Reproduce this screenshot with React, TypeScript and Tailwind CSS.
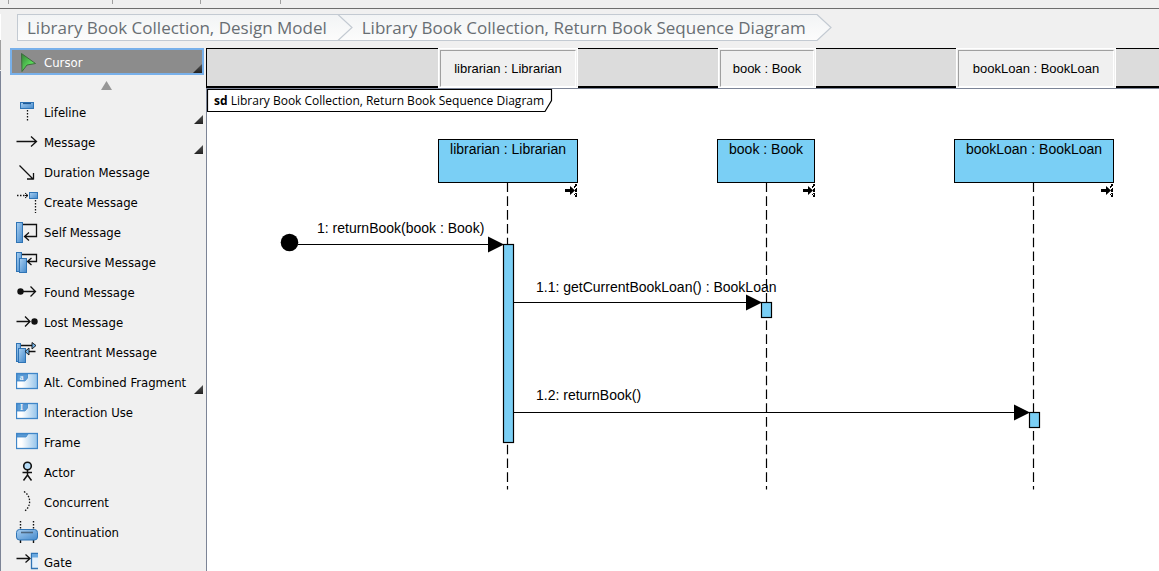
import type { ReactNode } from "react";

const BLUE = "#2f74b5";

function Defs() {
  return (
    <svg className="absolute h-0 w-0" aria-hidden="true">
      <defs>
        <linearGradient id="blueV" x1="0" y1="0" x2="1" y2="1">
          <stop offset="0" stopColor="#a9d0f2" />
          <stop offset="1" stopColor="#4489cb" />
        </linearGradient>
        <linearGradient id="paper" x1="0" y1="0" x2="1" y2="0">
          <stop offset="0.25" stopColor="#ffffff" />
          <stop offset="1" stopColor="#93c3ea" />
        </linearGradient>
        <linearGradient id="green" x1="0" y1="0" x2="1" y2="1">
          <stop offset="0.1" stopColor="#3c8f3e" />
          <stop offset="0.7" stopColor="#5fe65f" />
        </linearGradient>
        <linearGradient id="tri" x1="0" y1="0" x2="0" y2="1">
          <stop offset="0" stopColor="#555555" />
          <stop offset="1" stopColor="#222222" />
        </linearGradient>
        <linearGradient id="crumb" x1="0" y1="0" x2="0" y2="1">
          <stop offset="0" stopColor="#f2f4f5" />
          <stop offset="1" stopColor="#fcfcfc" />
        </linearGradient>
      </defs>
    </svg>
  );
}

function Icon({ children }: { children: ReactNode }) {
  return (
    <svg
      className="h-[22px] w-[22px] shrink-0"
      viewBox="0 0 22 22"
      fill="none"
      stroke="#111"
      strokeWidth="1.3"
      aria-hidden="true"
    >
      {children}
    </svg>
  );
}

const bar = { fill: "url(#blueV)", stroke: BLUE, strokeWidth: 1 };

function FrameIcon({ letter }: { letter?: string }) {
  return (
    <Icon>
      <rect x="0.5" y="2.5" width="21" height="15" fill="url(#paper)" stroke="#3f86c8" />
      <path
        d={letter ? "M1 3H11.5V7L9 10H1Z" : "M1 3H12L10 6H1Z"}
        fill="#5b9bd5"
        stroke="#3f86c8"
        strokeWidth="0.8"
      />
      {letter && (
        <text
          x="5.5"
          y="9"
          textAnchor="middle"
          fontSize="8"
          fontFamily="Liberation Serif, serif"
          fontWeight="700"
          fill="#e6f2fc"
          stroke="none"
        >
          {letter}
        </text>
      )}
    </Icon>
  );
}

type Tool = { label: string; icon: ReactNode; more?: boolean };

const tools: Tool[] = [
  {
    label: "Lifeline",
    more: true,
    icon: (
      <Icon>
        <rect x="4.5" y="1.5" width="13" height="6" {...bar} />
        <path d="M7 2.5H15" stroke="#1f5a96" />
        <path d="M11.5 9V20" strokeDasharray="1.5 1.5" />
      </Icon>
    ),
  },
  {
    label: "Message",
    more: true,
    icon: (
      <Icon>
        <path d="M0.5 10.5H20.5M15 5.5L20.5 10.5L15 15.5" />
      </Icon>
    ),
  },
  {
    label: "Duration Message",
    icon: (
      <Icon>
        <path d="M3.5 4.5L17.5 18.5M17.5 12V18.5M11 18H17.5" />
      </Icon>
    ),
  },
  {
    label: "Create Message",
    icon: (
      <Icon>
        <path d="M1 4.5H10" strokeDasharray="1.5 1.5" />
        <path d="M9 2L12 4.5L9 7M9 4.5H12" strokeWidth="1" />
        <rect x="13.5" y="1.5" width="8" height="6" {...bar} />
        <path d="M19.5 9V22" strokeDasharray="1.5 1.5" />
      </Icon>
    ),
  },
  {
    label: "Self Message",
    icon: (
      <Icon>
        <rect x="0.5" y="1.5" width="6" height="20" {...bar} />
        <path d="M7 3.5H20.5V15.5H9M13 11.5L8.5 15.5L13 19.5" />
      </Icon>
    ),
  },
  {
    label: "Recursive Message",
    icon: (
      <Icon>
        <rect x="0.5" y="1.5" width="5" height="19" {...bar} />
        <rect x="3.5" y="7.5" width="7" height="14" {...bar} />
        <path d="M6 3.5H20.5V10.5H12M15.5 7L11.5 10.5L15.5 14" />
      </Icon>
    ),
  },
  {
    label: "Found Message",
    icon: (
      <Icon>
        <circle cx="4.5" cy="10.5" r="3.2" fill="#111" stroke="none" />
        <path d="M7 10.5H19.5M14.5 5.5L19.5 10.5L14.5 15.5" />
      </Icon>
    ),
  },
  {
    label: "Lost Message",
    icon: (
      <Icon>
        <circle cx="18.5" cy="10.5" r="3.2" fill="#111" stroke="none" />
        <path d="M0.5 10.5H14M9 5.5L14 10.5L9 15.5" />
      </Icon>
    ),
  },
  {
    label: "Reentrant Message",
    icon: (
      <Icon>
        <rect x="0.5" y="2.5" width="4" height="18" {...bar} />
        <rect x="2.5" y="7.5" width="7" height="14" {...bar} />
        <path d="M5 4.5H16M19.5 10.5H13" />
        <path d="M16 1.5L20 4.5L16 8Z" fill="#6fb0e6" strokeWidth="0.9" />
        <path d="M13 7L9 10.5L13 14Z" fill="#6fb0e6" strokeWidth="0.9" />
      </Icon>
    ),
  },
  { label: "Alt. Combined Fragment", more: true, icon: <FrameIcon letter="a" /> },
  { label: "Interaction Use", icon: <FrameIcon letter="I" /> },
  { label: "Frame", icon: <FrameIcon /> },
  {
    label: "Actor",
    icon: (
      <Icon>
        <circle cx="11.5" cy="5" r="3.8" fill="#b5dcf8" strokeWidth="1.6" />
        <path d="M11.5 9V14M6.5 11.5H16M7.5 19.5L11.5 14L15.5 19.5" strokeWidth="1.5" />
      </Icon>
    ),
  },
  {
    label: "Concurrent",
    icon: (
      <Icon>
        <path d="M8 0.5C15.5 5 15.5 16 8 20.5" strokeDasharray="1.5 1.5" />
      </Icon>
    ),
  },
  {
    label: "Continuation",
    icon: (
      <Icon>
        <path d="M4.5 0V9M17.5 0V9" strokeDasharray="1.5 1.5" strokeWidth="1.4" />
        <path d="M4.5 18V22M17.5 18V22" strokeWidth="1.4" />
        <rect x="0.5" y="8.5" width="21" height="10.5" rx="3" {...bar} />
        <path d="M5 11.5H17" stroke="#4c6780" strokeWidth="1.6" />
      </Icon>
    ),
  },
  {
    label: "Gate",
    icon: (
      <Icon>
        <path d="M0.5 7.5H14M9.5 3.5L14 7.5L9.5 11.5" />
        <path d="M22 2.5H15.5V17.5H22" fill="#e4f0fb" stroke={BLUE} />
        <rect x="16" y="3" width="6" height="3.5" fill="#6aa9e0" stroke="none" />
      </Icon>
    ),
  },
];

function Palette() {
  return (
    <aside className="flex w-[196px] shrink-0 flex-col overflow-hidden text-[13px]">
      <button
        type="button"
        className="relative mr-0.5 flex h-[27px] shrink-0 items-center border-2 border-[#78b0ea] bg-[#8c8c8c] pl-1 text-left text-white"
      >
        <Icon>
          <path d="M5.5 2.5L19.5 12.5L11 14L6 20.5Z" fill="url(#green)" stroke="#3d6b3d" strokeWidth="1" />
        </Icon>
        <span className="pt-0.5 pl-1.5">Cursor</span>
        <svg className="absolute right-0 bottom-0 h-[9px] w-[9px]" viewBox="0 0 9 9" aria-hidden="true">
          <path d="M9 0V9H0Z" fill="url(#tri)" />
        </svg>
      </button>
      <button
        type="button"
        aria-label="Scroll up"
        className="flex h-[22px] shrink-0 items-center justify-center pr-1 pb-0.5"
      >
        <svg className="h-[9px] w-[11px]" viewBox="0 0 11 9" aria-hidden="true">
          <path d="M5.5 0L11 9H0Z" fill="#979797" />
        </svg>
      </button>
      {tools.map((t) => (
        <button
          key={t.label}
          type="button"
          className="relative flex h-[30px] shrink-0 items-center pl-1.5 text-left whitespace-nowrap"
        >
          {t.icon}
          <span className="pt-0.5 pl-1.5">{t.label}</span>
          {t.more && (
            <svg
              className="absolute right-[3px] bottom-[3px] h-[9px] w-[9px]"
              viewBox="0 0 9 9"
              aria-hidden="true"
            >
              <path d="M9 0V9H0Z" fill="url(#tri)" />
            </svg>
          )}
        </button>
      ))}
    </aside>
  );
}

function Crumb({ children, last }: { children: string; last?: boolean }) {
  return (
    <li className="flex h-[27px]">
      <a
        href="#"
        className="flex items-center border-y border-[#c3cad2] bg-linear-to-b from-[#f2f4f5] to-[#fcfcfc] pr-2.5 pl-[9px]"
      >
        {children}
      </a>
      <svg className="h-[27px] w-4" viewBox="0 0 16 27" aria-hidden="true">
        <path d={last ? "M0 0H1L15 13.500L1 27H0Z" : "M0 0H16V27H0Z"} fill="url(#crumb)" />
        {!last && <path d="M0 0.500H16M0 26.500H16" stroke="#c3cad2" />}
        <path d="M0 0.500H1L15 13.500L1 26.500H0" fill="none" stroke="#c3cad2" strokeWidth="1.2" />
      </svg>
    </li>
  );
}

function Breadcrumbs() {
  return (
    <nav className="flex h-[39px] shrink-0 items-start pt-[5px] pl-[17px]" aria-label="Location">
      <ol className="flex border-l border-[#c3cad2] font-['Open_Sans',sans-serif] text-[17px] whitespace-nowrap text-[#686e73]">
        <Crumb>Library Book Collection, Design Model</Crumb>
        <Crumb last>Library Book Collection, Return Book Sequence Diagram</Crumb>
      </ol>
    </nav>
  );
}

function HeaderCell({ children }: { children: string }) {
  return (
    <div className="border border-white bg-[#f0f0f0] p-px pb-0">
      <div className="flex h-full items-center justify-center border border-[#a0a0a0] border-r-white border-b-white pt-px whitespace-nowrap">
        {children}
      </div>
    </div>
  );
}

function LifelineHeader() {
  return (
    <div className="h-[41px] shrink-0 border-b border-[#7c8496]">
      <div className="relative h-10 border-t border-b-2 border-l border-black bg-[#dcdcdc]">
        <div className="absolute -inset-y-px left-0 flex h-10 gap-[140px] pl-[231px] font-['Liberation_Sans',Arial,sans-serif] text-[13px]">
          <div className="grid w-[140px]">
            <HeaderCell>librarian : Librarian</HeaderCell>
          </div>
          <div className="grid w-[98px]">
            <HeaderCell>book : Book</HeaderCell>
          </div>
          <div className="grid w-40">
            <HeaderCell>bookLoan : BookLoan</HeaderCell>
          </div>
        </div>
      </div>
    </div>
  );
}

function ShowMark({ x }: { x: number }) {
  return (
    <g transform={`translate(${x} 184)`} fill="#000">
      <path d="M0 5H5V2L10 6.5L5 11V8H0Z" />
      <path d="M10 0H12V2H11V3H10ZM9 2H10V4H9ZM11 4H12V8H10V5H11ZM9 10H10V11H9ZM10 9H12V13H10V11H11V10H10Z" />
    </g>
  );
}

function Diagram() {
  return (
    <main className="relative min-h-0 flex-1 overflow-hidden border-l border-[#7c8496] bg-white font-['Liberation_Sans',Arial,sans-serif] text-sm leading-4 whitespace-nowrap">
      <svg className="absolute top-0 left-0 h-[482px] w-[952px]" viewBox="207 89 952 482" aria-hidden="true">
        <path d="M207.500 89.500H551.500V100.500L545 111.500H207.500Z" fill="#fff" stroke="#000" strokeWidth="1.2" />
        <g stroke="#000" strokeWidth="1.2" strokeDasharray="9.600 4.200">
          <path d="M507.500 182.500V489.500" />
          <path d="M766.500 182.500V489.500" />
          <path d="M1033.500 182.500V489.500" />
        </g>
        <g stroke="#000" strokeWidth="1.2">
          <path d="M298 244.500H490M514 302.500H748M514 412.500H1016" />
        </g>
        <circle cx="289.500" cy="242.500" r="8.800" />
        <path d="M488 236.500L504 244.500L488 252.500ZM746 294.500L762 302.500L746 310.500ZM1014 404.500L1030 412.500L1014 420.500Z" />
        <g fill="#7acff5" stroke="#000" strokeWidth="1.200">
          <rect x="503.500" y="244.500" width="10" height="198" />
          <rect x="761.500" y="302.500" width="10" height="15" />
          <rect x="1029.500" y="412.500" width="10" height="15" />
        </g>
        <ShowMark x={565} />
        <ShowMark x={803} />
        <ShowMark x={1101} />
      </svg>
      <h1 className="absolute top-1 left-[7px] font-['Open_Sans',sans-serif] text-[12px]">
        <b>sd</b> Library Book Collection, Return Book Sequence Diagram
      </h1>
      <div className="absolute top-[50px] left-[231px] h-11 w-[140px] border border-black bg-[#7acff5] pt-px text-center">
        librarian : Librarian
      </div>
      <div className="absolute top-[50px] left-[510px] h-11 w-[98px] border border-black bg-[#7acff5] pt-px text-center">
        book : Book
      </div>
      <div className="absolute top-[50px] left-[747px] h-11 w-40 border border-black bg-[#7acff5] pt-px text-center">
        bookLoan : BookLoan
      </div>
      <p className="absolute top-[131px] left-[110px]">1: returnBook(book : Book)</p>
      <p className="absolute top-[190px] left-[329px]">1.1: getCurrentBookLoan() : BookLoan</p>
      <p className="absolute top-[298px] left-[329px]">1.2: returnBook()</p>
    </main>
  );
}

export default function App() {
  return (
    <div className="flex h-screen flex-col overflow-hidden bg-[#f0f0f0] font-['DejaVu_Sans_Condensed','DejaVu_Sans',Verdana,sans-serif] text-black">
      <Defs />
      <div className="flex h-[9px] shrink-0 items-start border-b border-[#6e6e6e]">
        <div className="h-1 w-[9px] border-r border-[#a0a0a0]" />
        <div className="h-1 w-[104px] border-r border-[#a0a0a0]" />
        <div className="h-1 w-[88px] border-r border-[#a0a0a0]" />
        <div className="h-1 w-20 border-r border-[#a0a0a0]" />
      </div>
      <div className="flex min-h-0 flex-1">
        <div className="flex w-px shrink-0 flex-col pt-[5px]">
          <div className="h-[26px] bg-white" />
          <div className="h-[30px] bg-[#a0a0a0]" />
          <div className="mt-px flex-1 bg-[#7c8496]" />
        </div>
        <div className="-ml-px flex min-w-0 flex-1 flex-col">
          <Breadcrumbs />
          <div className="flex min-h-0 flex-1 pl-2.5">
            <Palette />
            <div className="flex min-w-0 flex-1 flex-col">
              <LifelineHeader />
              <Diagram />
            </div>
          </div>
        </div>
      </div>
    </div>
  );
}
